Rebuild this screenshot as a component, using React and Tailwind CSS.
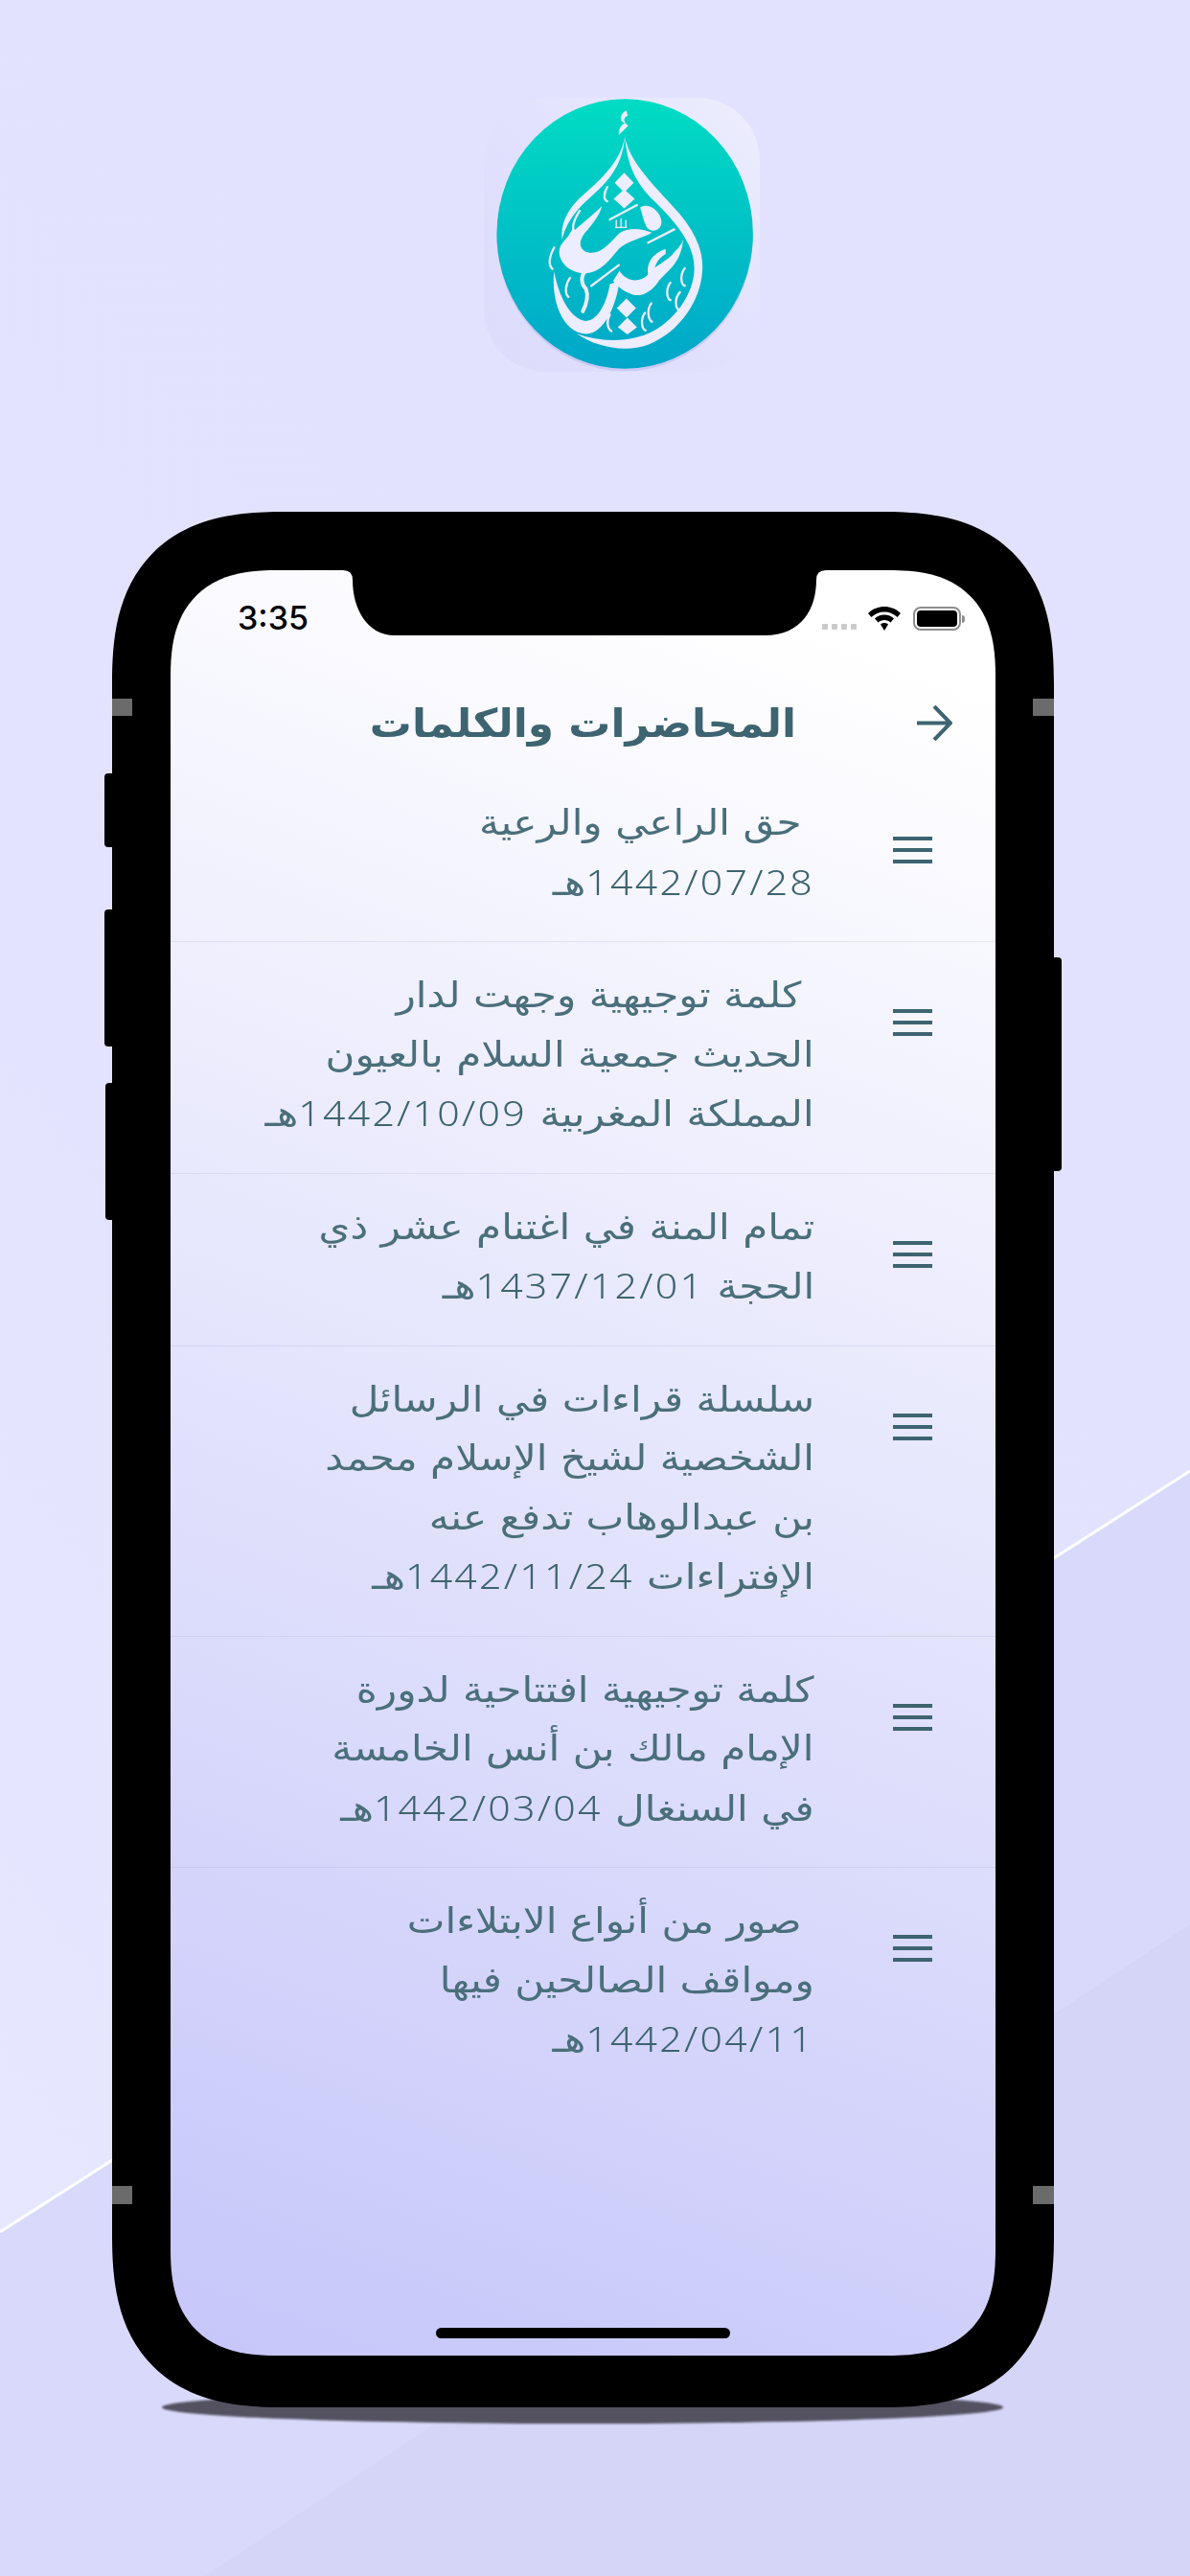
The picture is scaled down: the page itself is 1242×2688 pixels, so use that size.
const lectures = [
  { lines: ["\u00a0حق الراعي والرعية", <><Num>1442/07/28</Num>هـ</>] },
  { lines: ["\u00a0كلمة توجيهية وجهت لدار", "الحديث جمعية السلام بالعيون", <>المملكة المغربية <Num>1442/10/09</Num>هـ</>] },
  { lines: ["تمام المنة في اغتنام عشر ذي", <>الحجة <Num>1437/12/01</Num>هـ</>] },
  { lines: ["سلسلة قراءات في الرسائل", "الشخصية لشيخ الإسلام محمد", "بن عبدالوهاب تدفع عنه", <>الإفتراءات <Num>1442/11/24</Num>هـ</>] },
  { lines: ["كلمة توجيهية افتتاحية لدورة", "الإمام مالك بن أنس الخامسة", <>في السنغال <Num>1442/03/04</Num>هـ</>] },
  { lines: ["\u00a0صور من أنواع الابتلاءات", "ومواقف الصالحين فيها", <><Num>1442/04/11</Num>هـ</>] },
];

function Num({ children }) {
  return <span dir="ltr" className="inline-block font-['Noto_Sans','DejaVu_Sans',sans-serif] text-[36px] font-light tracking-[2px] text-[#3d6470]">{children}</span>;
}

function Background() {
  return (
    <svg className="absolute inset-0" width="1242" height="2688" viewBox="0 0 1242 2688">
      <defs>
        <linearGradient id="page" x1="0" y1="1" x2="0.6" y2="0">
          <stop offset="0" stopColor="#e8e8ff" />
          <stop offset="0.45" stopColor="#e3e3ff" />
          <stop offset="1" stopColor="#e2e2fe" />
        </linearGradient>
      </defs>
      <rect width="1242" height="2688" fill="url(#page)" />
      <polygon points="0,2329 1242,1535 1242,2688 0,2688" fill="#d9d9fb" />
      <polygon points="214,2688 1242,2008 1242,2688" fill="#d5d5f8" />
      <line x1="0" y1="2329" x2="1242" y2="1535" stroke="#ffffff" strokeWidth="3" />
    </svg>
  );
}

function Logo() {
  const ticks = [
    "M462 345 C450 365 450 385 462 390", "M375 420 C355 450 348 480 362 490", "M355 480 C340 500 335 525 348 530",
    "M295 535 C280 560 275 590 290 602", "M345 630 C330 650 328 680 340 690", "M705 600 C690 620 692 650 705 655",
    "M660 645 C645 665 648 695 660 700", "M690 675 C672 695 675 725 688 732", "M600 710 C585 730 590 760 602 768",
    "M580 740 C565 760 570 790 582 795", "M470 745 C458 765 462 790 475 797", "M415 555 C405 575 408 590 420 597",
  ];
  return (
    <svg className="absolute inset-0" width="288" height="286" viewBox="75 65 865 860">
      <defs>
        <linearGradient id="logoFill" x1="0" y1="0" x2="0" y2="1">
          <stop offset="0" stopColor="#00dcc3" />
          <stop offset="1" stopColor="#00a6c9" />
        </linearGradient>
      </defs>
      <ellipse cx="517" cy="492" rx="402" ry="423" fill="#8f8fd8" opacity="0.25" transform="translate(0 8)" />
      <ellipse cx="517" cy="492" rx="402" ry="423" fill="url(#logoFill)" />
      <g fill="#ecedff">
        <path d="M522 105 C500 115 498 142 518 145 C504 150 497 165 498 182 L528 152 C510 142 512 125 526 122 Z" />
        <path d="M517 185 C530 270 620 350 690 430 C740 490 765 550 760 610 C755 700 690 800 590 840 C520 865 430 850 365 805 C430 830 520 835 590 805 C670 770 735 680 735 600 C735 520 670 450 610 390 C560 340 525 290 517 185Z" />
        <path d="M517 185 C505 270 430 330 370 385 C330 425 315 470 320 510 C330 470 350 430 400 385 C450 340 510 290 517 185Z" />
        <path d="M515 300 L545 332 L515 362 L485 332 Z" />
        <path d="M515 352 L548 382 L515 412 L482 382 Z" />
        <path d="M522 695 L552 725 L522 755 L492 725 Z" />
        <path d="M525 755 L555 785 L525 808 L495 785 Z" />
        <path d="M565 410 C590 392 628 420 632 452 C634 482 600 492 585 470 C575 450 572 430 565 410Z" />
        <path d="M445 405 C400 450 340 490 315 530 C300 565 330 612 390 616 C440 616 470 572 500 537 C530 512 570 507 602 488 C570 476 530 470 500 490 C470 520 440 560 400 550 C370 540 370 510 400 480 C420 455 440 430 445 405Z" />
        <path d="M700 510 C692 590 650 605 620 645 C600 672 570 692 540 682 C510 672 490 652 480 640 L500 608 C520 640 560 650 590 620 C610 590 650 580 672 550 C686 535 695 525 700 510Z" />
        <path d="M295 610 C285 700 320 802 395 806 C450 806 490 720 500 640 L470 650 C460 710 430 770 390 765 C345 755 310 690 295 610Z" />
        <path d="M645 540 C605 552 580 585 592 628 L612 622 C605 595 620 570 645 555Z" />
      </g>
      <g fill="none" stroke="#ecedff" strokeLinecap="round" strokeLinejoin="round">
        <path d="M555 402 L470 447 M672 478 L590 520 M498 590 L412 655" strokeWidth="7" />
        <path d="M400 605 C375 620 380 650 395 665 C405 690 395 715 385 735" strokeWidth="12" />
        <path d="M490 470 L490 450 M505 470 L505 445 M520 470 L520 450 M488 472 L522 472" strokeWidth="4" />
        {ticks.map((d) => (
          <path key={d} d={d} strokeWidth="7" />
        ))}
      </g>
    </svg>
  );
}

function MenuIcon() {
  return (
    <div className="mt-[70px] flex w-[41px] shrink-0 flex-col gap-2">
      <div className="h-1 bg-[#3d6470]" />
      <div className="h-1 bg-[#3d6470]" />
      <div className="h-1 bg-[#3d6470]" />
    </div>
  );
}

function StatusBar() {
  return (
    <div className="flex h-[100px] justify-between pt-[27px] pl-[70px] pr-[32px]">
      <span className="font-['Inter',sans-serif] text-[34px] font-medium leading-[46px] text-black">3:35</span>
      <div className="flex h-[25px] mt-[11px] items-end gap-3">
        <div className="mb-px flex gap-1">
          <span className="size-[6px] rounded-[1px] bg-[#cbcbcb]" />
          <span className="size-[6px] rounded-[1px] bg-[#cbcbcb]" />
          <span className="size-[6px] rounded-[1px] bg-[#cbcbcb]" />
          <span className="size-[6px] rounded-[1px] bg-[#cbcbcb]" />
        </div>
        <svg width="34" height="25" viewBox="0 0 34 25">
          <path d="M17 0 C23 0 29 2 34 7 L30.5 11 C27 7.5 22 5.5 17 5.5 C12 5.5 7 7.5 3.5 11 L0 7 C5 2 11 0 17 0Z" />
          <path d="M17 8.5 C21 8.5 24.5 10 27 12.5 L23.5 16.5 C22 15 19.5 14 17 14 C14.5 14 12 15 10.5 16.5 L7 12.5 C9.500 10 13 8.5 17 8.5Z" />
          <path d="M17 17 C18.500 17 20 17.500 21 18.500 L17 25 L13 18.500 C14 17.500 15.500 17 17 17Z" />
        </svg>
        <div className="ml-px flex items-center">
          <div className="h-[25px] w-[50px] rounded-[8px] border-2 border-[#8e8e8e] p-[2px]">
            <div className="h-full rounded-[4px] bg-black" />
          </div>
          <div className="ml-px h-2 w-[3px] rounded-r-full bg-[#8e8e8e]" />
        </div>
      </div>
    </div>
  );
}

function Screen() {
  return (
    <div className="relative flex h-[1863px] w-[861px] flex-col overflow-hidden rounded-[112px] [corner-shape:superellipse(1.35)] bg-[linear-gradient(200deg,#ffffff_6%,#c6c6fa_100%)]">
      <StatusBar />
      <svg className="absolute left-[180px] top-0" width="504" height="68" viewBox="0 0 504 68">
        <path d="M0 0 Q10 0 10 10 C10 40 25 68 54 68 H440 C479 68 494 40 494 10 Q494 0 504 0 Z" />
      </svg>
      <div className="flex h-[108px] items-center justify-end gap-[126px] pr-[45px]">
        <h1 dir="rtl" className="mt-[14px] origin-right scale-x-[1.07] font-['DejaVu_Sans',sans-serif] text-[41px] font-bold text-[#3d6470]">المحاضرات والكلمات</h1>
        <svg width="37" height="37" viewBox="0 0 37 37" fill="none" stroke="#3d6470" strokeWidth="4" className="mt-[10px]">
          <path d="M0 18.500 H35 M18 1 L35 18.500 L18 36" />
        </svg>
      </div>
      <div>
        {lectures.map((item, i) => (
          <div key={i} className="flex justify-end gap-[82px] border-b border-[#9b9bc8]/20 pr-[66px] last:border-b-0">
            <div dir="rtl" className="origin-right scale-x-[1.14] pt-[25px] pb-[30px] font-['DejaVu_Sans',sans-serif] text-[37px] leading-[61.5px] text-[#4a6f7b]">
              {item.lines.map((line, j) => (
                <div key={j} className="whitespace-nowrap">{line}</div>
              ))}
            </div>
            <MenuIcon />
          </div>
        ))}
      </div>
      <div className="absolute bottom-[18px] left-[277px] h-[11px] w-[307px] rounded-full bg-black" />
    </div>
  );
}

function Phone() {
  return (
    <div className="relative ml-[117px] mt-[146px] self-start">
      <div className="absolute -bottom-[17px] left-[52px] h-[34px] w-[878px] rounded-[50%] bg-[#545260] blur-[1px]" />
      <div className="absolute left-[-8px] top-[273px] h-[77px] w-3 rounded-l-[4px] bg-black" />
      <div className="absolute left-[-8px] top-[415px] h-[143px] w-3 rounded-l-[4px] bg-black" />
      <div className="absolute left-[-7px] top-[596px] h-[143px] w-3 rounded-l-[4px] bg-black" />
      <div className="absolute right-[-8px] top-[465px] h-[223px] w-3 rounded-r-[4px] bg-black" />
      <div className="relative h-[1978px] w-[983px] rounded-[180px] [corner-shape:superellipse(1.35)] bg-black pl-[61px] pt-[61px]">
        <Screen />
        <div className="absolute left-0 top-[195px] h-[18px] w-[21px] bg-[#6b6b6b]" />
        <div className="absolute right-0 top-[195px] h-[18px] w-[22px] bg-[#6b6b6b]" />
        <div className="absolute left-0 top-[1747px] h-[19px] w-[21px] bg-[#6b6b6b]" />
        <div className="absolute right-0 top-[1747px] h-[19px] w-[22px] bg-[#6b6b6b]" />
      </div>
    </div>
  );
}

export default function App() {
  return (
    <div className="relative h-[2688px] w-[1242px] overflow-hidden">
      <Background />
      <div className="relative flex flex-col pt-[102px]">
        <div className="relative ml-[505px] h-[286px] w-[288px] rounded-[65px] bg-[linear-gradient(45deg,#dcdcfb,#e2e2fe_55%,#eeeefe)]">
          <Logo />
        </div>
        <Phone />
      </div>
    </div>
  );
}
